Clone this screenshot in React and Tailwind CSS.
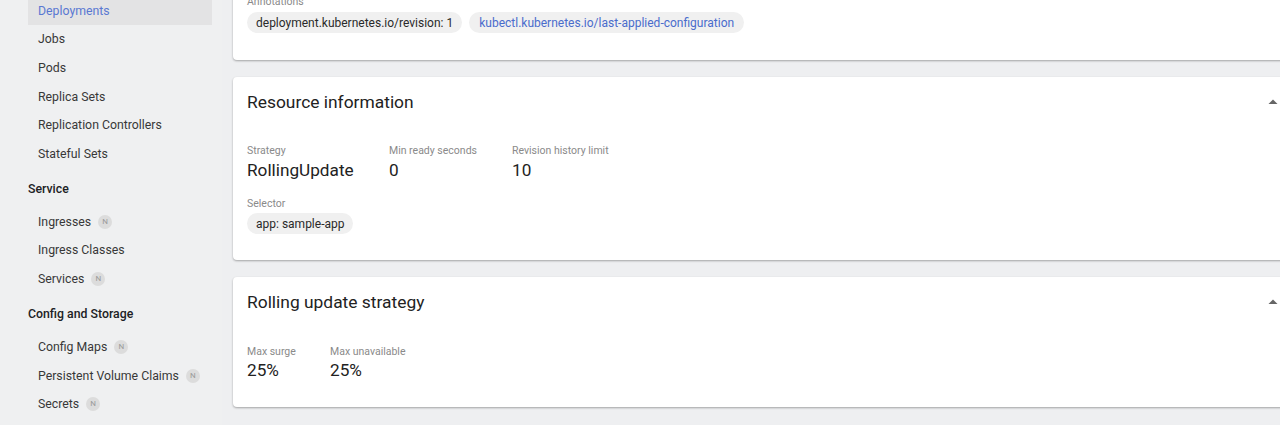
import React from 'react';

const font = { fontFamily: 'Roboto, "Liberation Sans", sans-serif' };

const groups = [
  {
    items: [
      { name: 'Deployments', active: true },
      { name: 'Jobs' },
      { name: 'Pods' },
      { name: 'Replica Sets' },
      { name: 'Replication Controllers' },
      { name: 'Stateful Sets' },
    ],
  },
  {
    title: 'Service',
    items: [
      { name: 'Ingresses', ns: true },
      { name: 'Ingress Classes' },
      { name: 'Services', ns: true },
    ],
  },
  {
    title: 'Config and Storage',
    items: [
      { name: 'Config Maps', ns: true },
      { name: 'Persistent Volume Claims', ns: true },
      { name: 'Secrets', ns: true },
    ],
  },
];

function NsBadge() {
  return (
    <span className="ml-[7px] w-[14px] h-[14px] rounded-full bg-[#dcdcdc] text-[#9a9a9a] text-[8px] leading-none flex items-center justify-center">
      N
    </span>
  );
}

function Sidebar() {
  return (
    <aside className="w-[222px] shrink-0 bg-[#eff0f1] pl-[28px] pr-[10px]">
      <div className="-mt-[3.3px]">
        {groups.map((g, gi) => (
          <div key={gi}>
            {g.title && (
              <div className="h-[39.4px] pt-[12.7px] text-[12.3px] leading-4 font-medium text-[#202124]">
                {g.title}
              </div>
            )}
            {g.items.map((it) => (
              <div
                key={it.name}
                className={`h-[28.6px] pl-[10px] flex items-center text-[12.3px] ${
                  it.active ? 'bg-[#e3e3e4] text-[#5a78d2]' : 'text-[#383838]'
                }`}
              >
                {it.name}
                {it.ns && <NsBadge />}
              </div>
            ))}
          </div>
        ))}
      </div>
    </aside>
  );
}

function Chip({ children, link }) {
  return (
    <span
      className={`h-[21px] px-[9px] rounded-full bg-[#f0f0f0] text-[12px] flex items-center ${
        link ? 'text-[#4a6ccc] px-[10px]' : 'text-[#2a2a2a]'
      }`}
    >
      {children}
    </span>
  );
}

function Label({ children }) {
  return <div className="text-[10.5px] leading-[14px] text-[#8a8a8a]">{children}</div>;
}

function Value({ children }) {
  return <div className="text-[17.2px] leading-[20px] text-[#222]">{children}</div>;
}

function ArrowUp() {
  return (
    <svg width="24" height="24" viewBox="0 0 24 24" className="text-[#666]">
      <path d="M7.5 14l4.5-4.5 4.5 4.5z" fill="currentColor" />
    </svg>
  );
}

function Card({ children, className = '' }) {
  return (
    <div className={`bg-white rounded-[4px] shadow-[0_1px_2px_rgba(0,0,0,0.25),0_1px_3px_rgba(0,0,0,0.08)] ${className}`}>
      {children}
    </div>
  );
}

function CardHeader({ title }) {
  return (
    <div className="h-[50px] pl-[14px] pr-[12px] flex items-center justify-between">
      <h3 className="text-[17.4px] text-[#222]">{title}</h3>
      <ArrowUp />
    </div>
  );
}

export default function App() {
  return (
    <div style={font} className="w-[1280px] h-[425px] overflow-hidden flex bg-[#eeeff1]">
      <Sidebar />
      <main className="flex-1 overflow-hidden pl-[11px]">
        <div className="w-[1064px] -mt-[21px] flex flex-col gap-[17px]">
          <Card className="pt-4 pb-[27px] px-[14px]">
            <Label>Annotations</Label>
            <div className="mt-[3px] flex gap-[7px]">
              <Chip>deployment.kubernetes.io/revision: 1</Chip>
              <Chip link>kubectl.kubernetes.io/last-applied-configuration</Chip>
            </div>
          </Card>

          <Card className="h-[183px]">
            <CardHeader title="Resource information" />
            <div className="px-[14px] pt-[17px]">
              <div className="flex">
                <div className="w-[142px]">
                  <Label>Strategy</Label>
                  <div className="mt-[2px]"><Value>RollingUpdate</Value></div>
                </div>
                <div className="w-[123px]">
                  <Label>Min ready seconds</Label>
                  <div className="mt-[2px]"><Value>0</Value></div>
                </div>
                <div>
                  <Label>Revision history limit</Label>
                  <div className="mt-[2px]"><Value>10</Value></div>
                </div>
              </div>
              <div className="mt-[17px]">
                <Label>Selector</Label>
                <div className="mt-[2px] flex">
                  <Chip>app: sample-app</Chip>
                </div>
              </div>
            </div>
          </Card>

          <Card className="h-[130px]">
            <CardHeader title="Rolling update strategy" />
            <div className="px-[14px] pt-[18px] flex">
              <div className="w-[83px]">
                <Label>Max surge</Label>
                <div className="mt-[1px]"><Value>25%</Value></div>
              </div>
              <div>
                <Label>Max unavailable</Label>
                <div className="mt-[1px]"><Value>25%</Value></div>
              </div>
            </div>
          </Card>
        </div>
      </main>
    </div>
  );
}
